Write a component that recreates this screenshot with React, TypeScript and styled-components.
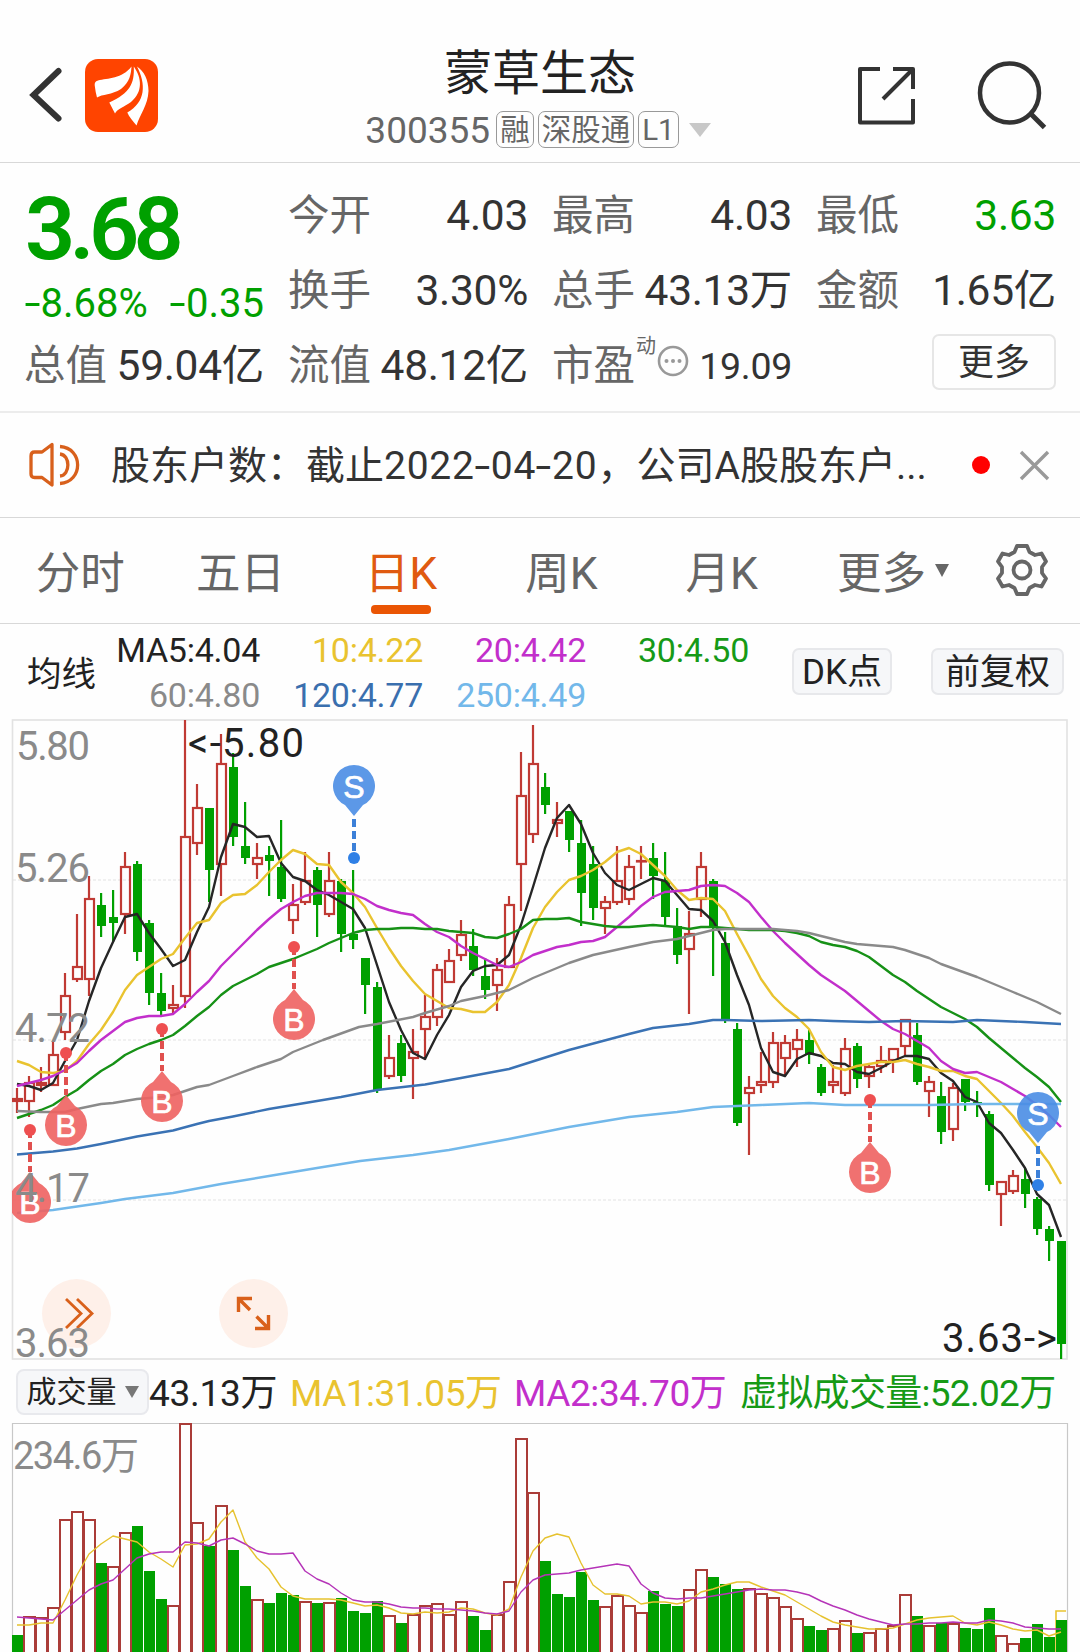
import React from "react";
import styled, { createGlobalStyle, css } from "styled-components";

const GREEN = "#00a000";
const RED = "#c03a34";
const YELLOW = "#e9c32f";
const MAGENTA = "#c22fcb";
const FONT = 'Roboto, "Noto Sans CJK SC", sans-serif';

const Global = createGlobalStyle`
  html, body { margin: 0; padding: 0; background: #fefefe; }
  *, *::before, *::after { box-sizing: border-box; }
  body { font-family: ${FONT}; color: #333; }
  svg { display: block; }
  button { font: inherit; color: inherit; background: none; border: 0; padding: 0; margin: 0; }
`;

const Page = styled.div`
  width: 1080px;
  height: 1652px;
  overflow: hidden;
  display: flex;
  flex-direction: column;
  background: #fefefe;
`;

/* ---------- header ---------- */
const Header = styled.header`
  flex: none;
  height: 163px;
  border-bottom: 1.5px solid #d8d8d8;
  display: grid;
  grid-template-columns: 340px 1fr 340px;
  padding-top: 42px;
`;
const HeaderSide = styled.div<{ $end?: boolean }>`
  display: flex;
  align-items: flex-start;
  justify-content: ${(p) => (p.$end ? "flex-end" : "flex-start")};
  gap: ${(p) => (p.$end ? "60px" : "21px")};
  padding: ${(p) => (p.$end ? "17px 31px 0 0" : "17px 0 0 28px")};
`;
const TitleBlock = styled.div`
  display: flex;
  flex-direction: column;
  align-items: center;
`;
const Title = styled.h1`
  margin: 0;
  padding-top: 2px;
  font-size: 48px;
  line-height: 60px;
  font-weight: 400;
  color: #222;
`;
const CodeRow = styled.div`
  display: flex;
  align-items: center;
  height: 37px;
  margin: 7px 4px 0 0;
  color: #666;
  gap: 4px;
`;
const Code = styled.span`
  font-size: 37px;
  line-height: 37px;
  margin-right: 2px;
  padding-top: 1px;
`;
const Tag = styled.span`
  height: 37px;
  border: 1.5px solid #999;
  border-radius: 7px;
  padding: 0 3px;
  font-size: 29.5px;
  line-height: 36px;
`;
const Caret = styled.span<{ $w: number; $h: number; $c: string; $ml?: number }>`
  width: 0;
  height: 0;
  margin-left: ${(p) => p.$ml || 0}px;
  border-left: ${(p) => p.$w / 2}px solid transparent;
  border-right: ${(p) => p.$w / 2}px solid transparent;
  border-top: ${(p) => p.$h}px solid ${(p) => p.$c};
`;
const Hyphen = styled.span`
  display: inline-block;
  margin: 0 2.5px 0 2px;
  transform: scaleX(1.45);
`;

/* ---------- quote ---------- */
const Quote = styled.section`
  flex: none;
  height: 250px;
  border-bottom: 2px solid #ececec;
  padding: 15px 24px 0 25px;
  display: grid;
  grid-template-columns: repeat(4, 1fr);
  grid-template-rows: 75px 75px 75px;
  column-gap: 25px;
`;
const PriceBlock = styled.div`
  grid-row: span 2;
  color: ${GREEN};
`;
const Price = styled.div`
  font-size: 88px;
  line-height: 102px;
  font-weight: 600;
  letter-spacing: -5.7px;
`;
const Change = styled.div`
  display: flex;
  justify-content: space-between;
  font-size: 40px;
  line-height: 48px;
`;
const Cell = styled.div`
  display: flex;
  align-items: center;
  justify-content: space-between;
  white-space: nowrap;
  height: 75px;
`;
const CellLabel = styled.span`
  display: flex;
  margin-left: -1px;
  font-size: 41.5px;
  line-height: 50px;
  color: #666;
`;
const CellValue = styled.span<{ $c?: string; $small?: boolean }>`
  font-size: ${(p) => (p.$small ? 37.5 : 42.5)}px;
  line-height: 50px;
  letter-spacing: -0.3px;
  color: ${(p) => p.$c || "#333"};
`;
const Sup = styled.sup`
  font-size: 20px;
  line-height: 20px;
  margin: -5px 0 0 1px;
`;
const Info = styled.span`
  margin: 4px 0 0 1px;
`;
const MoreCell = styled.div`
  display: flex;
  justify-content: flex-end;
  align-items: center;
`;
const MoreButton = styled.button`
  width: 124px;
  height: 56px;
  margin-top: -7px;
  border: 2px solid #e6e6e6;
  border-radius: 7px;
  font-size: 36px;
  line-height: 54px;
`;

/* ---------- notice ---------- */
const Notice = styled.section`
  flex: none;
  height: 105px;
  border-bottom: 1.5px solid #d8d8d8;
  display: flex;
  align-items: center;
  padding: 0 29px;
`;
const NoticeText = styled.p`
  margin: 2px 0 0 29px;
  width: 861px;
  font-size: 39px;
  line-height: 50px;
  white-space: nowrap;
  color: #333;
`;
const NoticeDate = styled.span`
  letter-spacing: 0.75px;
`;
const Dot = styled.span`
  flex: none;
  width: 18px;
  height: 18px;
  border-radius: 50%;
  background: #f00;
  margin: 0 29px 0 0;
`;

/* ---------- tabs ---------- */
const Tabs = styled.nav`
  flex: none;
  height: 106px;
  border-bottom: 1.5px solid #d8d8d8;
  display: grid;
  grid-template-columns: repeat(5, 160.4px) 1fr 110px;
`;
const Tab = styled.button<{ $on?: boolean }>`
  display: flex;
  flex-direction: column;
  align-items: center;
  padding-top: 27px;
  font-size: 44.5px;
  line-height: 58px;
  color: ${(p) => (p.$on ? "#e05a10" : "#666")};
  ${(p) =>
    p.$on &&
    css`
      &::after {
        content: "";
        width: 60px;
        height: 9px;
        margin-top: 2px;
        border-radius: 4px;
        background: #ea5504;
      }
    `}
`;
const MoreTab = styled(Tab)`
  flex-direction: row;
  align-items: flex-start;
  gap: 9px;
  padding-left: 35px;
  & > ${Caret} { margin-top: 19px; }
`;
const GearBox = styled.div`
  padding: 25px 0 0 25px;
`;

/* ---------- moving average legend ---------- */
const Legend = styled.section`
  flex: none;
  height: 95px;
  display: flex;
  align-items: center;
  padding: 0 16px 0 27px;
`;
const LegendName = styled.span`
  width: 70px;
  font-size: 34.5px;
  line-height: 44px;
  color: #222;
  margin-top: 5px;
`;
const LegendGrid = styled.div`
  display: grid;
  grid-template-columns: repeat(4, 163px);
  grid-auto-rows: 45px;
  text-align: right;
  font-size: 34px;
  letter-spacing: -0.25px;
  line-height: 45px;
  margin-top: 2px;
  white-space: nowrap;
`;
const LegendItem = styled.span<{ $c: string }>`
  color: ${(p) => p.$c};
`;
const Chip = styled.button<{ $w: number; $ml: number }>`
  width: ${(p) => p.$w}px;
  height: 47px;
  margin-left: ${(p) => p.$ml}px;
  border: 2px solid #e7e8eb;
  border-radius: 7px;
  background: #f6f7f9;
  font-size: 35px;
  line-height: 46px;
  color: #222;
  white-space: nowrap;
`;

/* ---------- charts ---------- */
const ChartBox = styled.section`
  flex: none;
  position: relative;
  height: 642px;
`;
const PlotLayer = styled.div`
  position: relative;
  z-index: 1;
  pointer-events: none;
`;
const Fab = styled.button<{ $x: number }>`
  position: absolute;
  left: ${(p) => p.$x}px;
  top: 560px;
  width: 69px;
  height: 69px;
  border-radius: 50%;
  background: #fef0e9;
  display: grid;
  place-items: center;
`;
const VolumeHead = styled.section`
  flex: none;
  height: 61px;
  display: flex;
  align-items: center;
  padding-left: 16px;
  white-space: nowrap;
  font-size: 37px;
  line-height: 46px;
`;
const VolumePicker = styled.button`
  width: 133px;
  height: 46px;
  border: 2px solid #e8e9ed;
  border-radius: 8px;
  background: #f6f7f9;
  display: flex;
  align-items: center;
  justify-content: center;
  gap: 8px;
  font-size: 30px;
  line-height: 42px;
  color: #222;
`;
const VolumeStat = styled.span<{ $c: string; $w: number; $ls: number }>`
  width: ${(p) => p.$w}px;
  padding-top: 4px;
  color: ${(p) => p.$c};
  letter-spacing: ${(p) => p.$ls}px;
`;
const VolumeBox = styled.section`
  flex: none;
  height: 230px;
`;

type Candle = [number, number, number, number, number]; // up(1)/down(0), high, top, bottom, low
const candles: Candle[] = [
  [1,1088,1098,1102,1113],[1,1076,1082,1102,1117],[1,1067,1082,1086,1092],[1,1042,1054,1086,1086],
  [1,973,995,1033,1040],[1,914,966,980,982],[1,876,898,980,996],[0,893,905,926,937],
  [0,890,917,923,942],[1,852,866,915,934],[0,861,864,952,961],[0,920,923,993,1005],
  [0,973,993,1011,1016],[1,985,1004,1009,1014],[1,720,836,997,1008],[1,784,807,844,855],
  [0,808,808,870,902],[1,734,763,865,896],[0,753,767,837,846],[0,802,846,858,864],
  [1,843,857,865,879],[0,846,855,861,896],[0,820,867,899,902],[1,884,904,921,934],
  [1,852,880,903,905],[0,867,870,905,937],[1,852,880,915,917],[0,879,881,934,952],
  [0,870,934,940,949],[0,958,958,985,1014],[0,982,987,1090,1093],[1,1035,1057,1077,1079],
  [0,1035,1043,1076,1082],[1,1029,1051,1059,1099],[1,995,1016,1030,1060],[1,964,969,1018,1026],
  [1,949,960,983,983],[1,920,934,956,961],[0,929,946,970,976],[0,958,976,990,999],
  [1,958,969,986,1011],[1,896,904,968,968],[1,752,795,865,911],[1,725,763,835,843],
  [0,773,787,805,814],[1,802,819,824,837],[0,811,811,840,852],[0,820,843,893,926],
  [0,846,864,908,920],[1,896,901,909,934],[1,846,880,903,905],[1,855,866,900,905],
  [1,846,860,862,879],[0,843,858,876,899],[0,852,880,917,926],[0,908,926,955,964],
  [1,911,933,950,1014],[1,852,866,900,917],[0,879,881,928,976],[0,932,943,1020,1023],
  [0,1023,1029,1123,1126],[1,1076,1087,1094,1155],[1,1052,1081,1086,1093],[1,1032,1042,1083,1088],
  [1,1035,1042,1059,1076],[1,1029,1039,1050,1067],[0,1030,1040,1055,1064],[0,1064,1067,1093,1096],
  [1,1065,1081,1086,1093],[1,1038,1048,1094,1096],[0,1043,1046,1079,1088],[1,1065,1066,1077,1088],
  [1,1046,1060,1067,1073],[1,1048,1048,1061,1073],[1,1019,1019,1047,1057],[0,1023,1035,1082,1085],
  [1,1076,1081,1092,1117],[0,1082,1096,1132,1144],[1,1083,1087,1130,1141],[0,1079,1079,1102,1111],
  [0,1091,1102,1104,1117],[0,1111,1114,1185,1191],[1,1181,1181,1195,1226],[1,1170,1175,1192,1194],
  [0,1168,1179,1194,1208],[0,1197,1199,1229,1235],[0,1226,1229,1241,1261],[0,1241,1241,1344,1359],
];

const ma5 = [1084,1086,1090,1083,1061,1040,1001,968,942,917,914,933,949,966,960,932,907,857,824,827,837,836,863,877,881,890,895,902,909,928,965,1002,1030,1053,1059,1035,1015,987,971,966,965,955,925,887,848,818,805,824,853,873,885,890,884,878,881,895,909,910,921,942,975,1005,1048,1072,1076,1059,1053,1056,1063,1064,1072,1074,1068,1061,1056,1056,1059,1073,1081,1097,1102,1123,1133,1150,1168,1194,1205,1237];
const ma10 = [1061,1065,1072,1073,1071,1061,1044,1030,1012,990,975,967,959,954,938,923,920,903,895,894,885,872,860,850,854,864,865,882,893,907,928,948,966,981,994,1001,1008,1009,1012,1012,1002,985,958,928,907,892,880,876,870,862,852,848,854,865,876,890,900,898,899,911,934,956,979,996,1008,1017,1029,1052,1067,1070,1066,1064,1062,1062,1060,1064,1067,1071,1071,1076,1079,1091,1103,1116,1132,1147,1163,1184];
const ma20 = [1086,1083,1080,1076,1070,1063,1051,1040,1031,1022,1018,1016,1016,1014,1004,992,981,966,954,942,930,919,909,902,896,893,893,893,894,899,906,910,913,915,924,932,937,946,953,959,965,967,962,955,951,947,945,942,941,937,927,917,906,897,892,891,890,886,885,886,893,902,917,931,943,954,965,975,983,991,1001,1011,1021,1029,1034,1041,1048,1061,1069,1073,1072,1077,1082,1089,1096,1105,1115,1127];
const ma30 = [1118,1114,1110,1105,1097,1090,1080,1071,1064,1055,1049,1044,1040,1035,1026,1016,1007,995,986,980,974,967,963,959,954,949,943,938,933,930,929,929,928,928,929,929,931,932,933,937,938,934,929,920,919,919,918,922,924,926,927,927,926,925,926,927,929,927,927,928,929,930,930,930,931,933,936,942,945,947,951,957,966,975,982,991,999,1007,1013,1019,1027,1038,1048,1058,1068,1077,1087,1102];
type Pt = [number, number];
const ma60: Pt[] = [[0,1111],[2,1112],[4,1112],[5,1109],[7,1104],[8,1103],[10,1099],[12,1097],[13,1095],[15,1087],[16,1085],[18,1076],[20,1067],[22,1059],[23,1052],[25.5,1040],[28.5,1027],[30,1024],[33,1017],[34,1013],[36,1006],[37,1001],[39,996],[41,990],[43,978],[46,963],[48,955],[51,947],[53,942],[55,939],[56,936],[58,930],[59,929],[63,929],[65,931],[66,933],[67,936],[69,942],[70,944],[73,947],[74,950],[76,958],[77,964],[80,977],[81,982],[83,992],[85,1002],[87,1014]];
const ma120: Pt[] = [[0,1154.5],[3,1151.5],[5,1148.5],[7,1144],[10,1136.5],[13,1130.5],[15,1124],[16,1121],[18,1116.5],[21,1109],[23,1105],[27,1097],[30,1090],[34,1084.5],[37,1078],[41,1069],[46,1050],[51,1034],[53,1028],[56,1024],[58,1020],[59,1020],[62,1021],[66,1020],[68,1021],[71,1022],[74,1021],[78,1022],[80,1020],[84,1022],[87,1024]];
const ma250: Pt[] = [[0,1213],[3,1210],[7,1203],[9,1199],[13,1193],[17,1184],[21,1176],[25,1168],[28.6,1161],[33,1155],[36,1150],[41,1139],[46,1127],[51,1117],[55,1112],[58,1107],[62,1105],[66,1103],[69,1105],[76,1105],[80,1104],[87,1104]];

const volumes = [1635,1616,1617,1607,1519,1511,1519,1563,1566,1532,1526,1571,1599,1605,1423,1522,1546,1505,1550,1586,1599,1603,1593,1595,1601,1603,1602,1598,1611,1613,1601,1615,1623,1614,1605,1603,1614,1601,1616,1630,1614,1581,1438,1492,1561,1594,1597,1572,1600,1606,1595,1605,1612,1591,1604,1606,1589,1569,1577,1584,1589,1588,1593,1597,1606,1618,1626,1630,1628,1620,1633,1632,1628,1625,1594,1616,1625,1623,1623,1628,1629,1608,1635,1643,1638,1624,1637,1620];
// 1 = rising bar (outlined), 0 = falling bar (filled), ten days per group
const volumeUp = [
  "0111111011", "0001110100", "1000101000", "0101111100", "1111000001",
  "1110001100", "0111110011", "0111101010", "00110000",
].join("");
const volMa1 = [1625,1625,1623,1623,1600,1575,1554,1544,1536,1539,1542,1552,1559,1567,1545,1544,1539,1522,1510,1542,1558,1569,1587,1596,1599,1599,1599,1600,1603,1606,1605,1608,1613,1614,1612,1613,1612,1608,1609,1613,1615,1609,1577,1551,1538,1534,1537,1563,1585,1594,1594,1596,1604,1602,1602,1604,1601,1592,1589,1585,1582,1582,1587,1591,1595,1602,1609,1616,1622,1625,1627,1629,1629,1628,1624,1620,1618,1617,1616,1623,1625,1622,1625,1629,1631,1630,1636,1632];
const volMa2 = [1617,1618,1619,1620,1610,1600,1590,1584,1580,1569,1558,1554,1552,1552,1542,1543,1546,1540,1538,1544,1551,1554,1554,1553,1571,1579,1584,1593,1600,1602,1602,1604,1607,1608,1608,1609,1609,1610,1611,1613,1614,1611,1592,1580,1575,1574,1573,1570,1568,1566,1564,1566,1584,1593,1598,1599,1598,1598,1596,1594,1592,1590,1589,1590,1590,1592,1595,1601,1606,1610,1615,1619,1622,1625,1624,1624,1623,1623,1622,1623,1623,1620,1621,1623,1627,1628,1629,1629];

const xAt = (i: number) => 17 + 12 * i;
const dense = (ys: number[]) => ys.map((y, i) => `${xAt(i)},${y}`).join(" ");
const sparse = (pts: Pt[]) => pts.map(([i, y]) => `${xAt(i)},${y}`).join(" ");

const Marker = ({ kind, x, dot }: { kind: "B" | "S"; x: number; dot: number }) => {
  const buy = kind === "B";
  const dir = buy ? 1 : -1;
  const c = dot + 72 * dir;
  const tip = dot + 42 * dir;
  return (
    <g>
      <line x1={x} x2={x} y1={dot} y2={tip} stroke={buy ? "#e0504e" : "#3c80d8"} strokeWidth={4} strokeDasharray="8 4" strokeDashoffset={buy ? 0 : 5} />
      <circle cx={x} cy={dot} r={6} fill={buy ? "#ee4f50" : "#2f80e6"} />
      <path
        d={`M${x} ${tip} L${x + 9} ${c - 19 * dir} A21 21 0 1 ${buy ? 1 : 0} ${x - 9} ${c - 19 * dir} Z`}
        fill={buy ? "#ee6260" : "#4a8de4"}
        fillOpacity={0.9}
      />
      <text x={x} y={c + 11.5} fontFamily='"Liberation Sans", sans-serif' fontSize={32} textAnchor="middle" fill="#fff" stroke="#fff" strokeWidth={0.7}>{kind}</text>
    </g>
  );
};

const AxisText = ({ x, y, w, c = "#8a8a8a", children }: { x: number; y: number; w: number; c?: string; children: string }) => (
  <text x={x} y={y} fontSize={40} fill={c} textLength={w}>{children}</text>
);

const PriceChart = () => (
  <svg width="1080" height="642" viewBox="0 719 1080 642" fontFamily={FONT}>
    <defs>
      <clipPath id="plot"><rect x="12" y="719" width="1056" height="642" /></clipPath>
    </defs>
    {[880, 1040, 1200].map((y) => (
      <line key={y} x1="13" x2="1066" y1={y} y2={y} stroke="#ececec" strokeWidth="1.5" strokeDasharray="3 2" />
    ))}
    <rect x="12.5" y="720" width="1054.5" height="639" fill="none" stroke="#e2e2e2" strokeWidth="1.6" />
    <g clipPath="url(#plot)">
      {candles.map(([up, high, top, bottom, low], i) => {
        const x = xAt(i);
        return up ? (
          <g key={i} stroke={RED} strokeWidth="2.2" fill="none">
            <path d={`M${x} ${high}V${top}M${x} ${bottom}V${low}`} />
            <rect x={x - 4} y={top + 1} width="9" height={Math.max(bottom - top - 2, 0.5)} />
          </g>
        ) : (
          <g key={i} fill={GREEN}>
            <rect x={x - 1} y={high} width="2.2" height={low - high} />
            <rect x={x - 4} y={top} width="9" height={bottom - top} />
          </g>
        );
      })}
      <g fill="none" strokeWidth="2.4" strokeLinejoin="round">
        <polyline points={dense(ma5)} stroke="#262626" />
        <polyline points={dense(ma10)} stroke={YELLOW} />
        <polyline points={dense(ma20)} stroke={MAGENTA} />
        <polyline points={dense(ma30)} stroke="#169116" />
        <polyline points={sparse(ma60)} stroke="#8a8a8a" />
        <polyline points={sparse(ma120)} stroke="#3a72b4" />
        <polyline points={sparse(ma250)} stroke="#72b8ea" />
      </g>
      <Marker kind="B" x={30} dot={1130} />
      <Marker kind="B" x={66} dot={1053} />
      <Marker kind="B" x={162} dot={1029} />
      <Marker kind="B" x={294} dot={947} />
      <Marker kind="B" x={870} dot={1100} />
      <Marker kind="S" x={354} dot={858} />
      <Marker kind="S" x={1038} dot={1185} />
    </g>
    <AxisText x={16} y={760} w={74}>5.80</AxisText>
    <AxisText x={15} y={881.5} w={75}>5.26</AxisText>
    <AxisText x={15} y={1042} w={75}>4.72</AxisText>
    <AxisText x={15} y={1201.5} w={75}>4.17</AxisText>
    <AxisText x={15} y={1357} w={75}>3.63</AxisText>
    <AxisText x={188} y={757} w={116} c="#222">{"<-5.80"}</AxisText>
    <AxisText x={942} y={1352} w={115} c="#222">{"3.63->"}</AxisText>
  </svg>
);

const VolumeChart = () => (
  <svg width="1080" height="230" viewBox="0 1422 1080 230" fontFamily={FONT}>
    <path d="M12.5 1652V1423.5H1067.5V1652" fill="none" stroke="#c8c8c8" strokeWidth="1.2" />
    <text x="13" y="1468.5" fontSize="38" fill="#8a8a8a" textLength="126">234.6万</text>
    {volumes.map((top, i) => {
      const x = xAt(i);
      return volumeUp[i] === "1" ? (
        <rect key={i} x={x - 5} y={top + 1} width="11" height={260} fill="#fefefe" stroke="#aa3c38" strokeWidth="2" />
      ) : (
        <rect key={i} x={x - 5} y={top} width="11" height={260} fill={GREEN} />
      );
    })}
    <path d="M1056 1652V1611H1066" fill="none" stroke={YELLOW} strokeWidth="1.6" />
    <rect x="1056" y="1620" width="11" height="32" fill={GREEN} />
    <g fill="none" strokeWidth="1.4" strokeLinejoin="round">
      <polyline points={dense(volMa1)} stroke="#e6c22f" />
      <polyline points={dense(volMa2)} stroke="#b534b8" />
    </g>
  </svg>
);

/* ---------- icons ---------- */
const BackIcon = () => (
  <svg width="36" height="72" viewBox="28 59 36 72">
    <path d="M58.5 71L33.5 95L58.5 118.5" fill="none" stroke="#333" strokeWidth="6" strokeLinecap="round" />
  </svg>
);
const LogoIcon = () => (
  <svg width="73" height="73" viewBox="85 59 73 73">
    <rect x="85" y="59" width="73" height="73" rx="13" fill="#ff4400" />
    <g fill="#fff">
      <path d="M131.5 66.5C122 79 108 78 98 80.5C95 81.5 94.500 83 94.8 86Q95.5 92 97 97.6C102 94 112 95 121 89C130 82 131 74 131.5 66.5Z" />
      <path d="M133.8 66.5C134.5 84 130 93 109.3 102.5L115 113.5C117 109 124 107 131 102C143 92 142 78 133.8 66.5Z" />
      <path d="M137 66.5C146 84 146 102 127.3 112.5C129 117 133 121 136.5 125.5C140 114 148 105 148.5 91C148.5 80 144 71 137 66.5Z" />
    </g>
  </svg>
);
const ShareIcon = () => (
  <svg width="60" height="66" viewBox="857 59 60 66">
    <g fill="none" stroke="#333" strokeWidth="4" strokeLinejoin="round" strokeLinecap="butt">
      <path d="M880 69H860V122.5H913V99" />
      <path d="M893 69H913V89M913 69L883 99" />
    </g>
  </svg>
);
const SearchIcon = () => (
  <svg width="72" height="72" viewBox="977 59 72 72">
    <circle cx="1009.5" cy="93" r="29.5" fill="none" stroke="#333" strokeWidth="4.5" />
    <path d="M1030 113L1044.5 127.5" stroke="#333" strokeWidth="5" />
  </svg>
);
const SpeakerIcon = () => (
  <svg width="53" height="46" viewBox="29 441 53 46">
    <g fill="none" stroke="#d8601c" strokeWidth="3.3" strokeLinejoin="round">
      <path d="M52 443.5L42 451H34.5Q31 451 31 455V473Q31 476.5 34.5 476.5H42L52 484Z" />
      <path d="M60 453C70.5 454 70.5 474 60 475M60 445.5C83.5 447 83.5 481 60 482.5" />
    </g>
  </svg>
);
const CloseIcon = () => (
  <svg width="31" height="31" viewBox="0 0 31 31">
    <path d="M2 2L29 29M29 2L2 29" stroke="#999" strokeWidth="3.4" />
  </svg>
);
const InfoIcon = () => (
  <svg width="32" height="32" viewBox="0 0 32 32">
    <circle cx="16" cy="16" r="14" fill="none" stroke="#999" strokeWidth="2.6" />
    <g fill="#999"><circle cx="9.5" cy="16" r="2" /><circle cx="16" cy="16" r="2" /><circle cx="22.5" cy="16" r="2" /></g>
  </svg>
);
const GearIcon = () => (
  <svg width="54" height="54" viewBox="-27 -27 54 54">
    <g fill="none" stroke="#666" strokeWidth="3.8" strokeLinejoin="round">
      <path d="M-5 -24H5L7.5 -18L13 -15L19.5 -16.5L24 -8.5L20 -3V3L24 8.5L19.5 16.5L13 15L7.5 18L5 24H-5L-7.5 18L-13 15L-19.5 16.5L-24 8.5L-20 3V-3L-24 -8.5L-19.5 -16.5L-13 -15L-7.5 -18Z" />
      <circle r="8.5" />
    </g>
  </svg>
);

const App = () => (
  <Page>
    <Global />
    <Header>
      <HeaderSide><BackIcon /><LogoIcon /></HeaderSide>
      <TitleBlock>
        <Title>蒙草生态</Title>
        <CodeRow>
          <Code>300355</Code>
          <Tag>融</Tag>
          <Tag>深股通</Tag>
          <Tag>L1</Tag>
          <Caret $w={22} $h={14} $c="#c8c8c8" $ml={6} />
        </CodeRow>
      </TitleBlock>
      <HeaderSide $end><ShareIcon /><SearchIcon /></HeaderSide>
    </Header>

    <Quote>
      <PriceBlock>
        <Price>3.68</Price>
        <Change>
          <span><Hyphen>-</Hyphen>8.68%</span>
          <span><Hyphen>-</Hyphen>0.35</span>
        </Change>
      </PriceBlock>
      <Cell><CellLabel>今开</CellLabel><CellValue>4.03</CellValue></Cell>
      <Cell><CellLabel>最高</CellLabel><CellValue>4.03</CellValue></Cell>
      <Cell><CellLabel>最低</CellLabel><CellValue $c={GREEN}>3.63</CellValue></Cell>
      <Cell><CellLabel>换手</CellLabel><CellValue>3.30%</CellValue></Cell>
      <Cell><CellLabel>总手</CellLabel><CellValue>43.13万</CellValue></Cell>
      <Cell><CellLabel>金额</CellLabel><CellValue>1.65亿</CellValue></Cell>
      <Cell><CellLabel>总值</CellLabel><CellValue>59.04亿</CellValue></Cell>
      <Cell><CellLabel>流值</CellLabel><CellValue>48.12亿</CellValue></Cell>
      <Cell>
        <CellLabel>市盈<Sup>动</Sup><Info><InfoIcon /></Info></CellLabel>
        <CellValue $small>19.09</CellValue>
      </Cell>
      <MoreCell><MoreButton>更多</MoreButton></MoreCell>
    </Quote>

    <Notice>
      <SpeakerIcon />
      <NoticeText>
        股东户数：截止<NoticeDate>2022<Hyphen>-</Hyphen>04<Hyphen>-</Hyphen>20</NoticeDate>，公司A股股东户...
      </NoticeText>
      <Dot />
      <CloseIcon />
    </Notice>

    <Tabs>
      <Tab>分时</Tab>
      <Tab>五日</Tab>
      <Tab $on>日K</Tab>
      <Tab>周K</Tab>
      <Tab>月K</Tab>
      <MoreTab>更多<Caret $w={15} $h={13} $c="#666" /></MoreTab>
      <GearBox><GearIcon /></GearBox>
    </Tabs>

    <Legend>
      <LegendName>均线</LegendName>
      <LegendGrid>
        <LegendItem $c="#222">MA5:4.04</LegendItem>
        <LegendItem $c={YELLOW}>10:4.22</LegendItem>
        <LegendItem $c={MAGENTA}>20:4.42</LegendItem>
        <LegendItem $c="#169a16">30:4.50</LegendItem>
        <LegendItem $c="#8a8a8a">60:4.80</LegendItem>
        <LegendItem $c="#3a6fae">120:4.77</LegendItem>
        <LegendItem $c="#72b8ea">250:4.49</LegendItem>
      </LegendGrid>
      <Chip $w={100} $ml={43}>DK点</Chip>
      <Chip $w={133} $ml={39}>前复权</Chip>
    </Legend>

    <ChartBox>
      <Fab $x={42}>
        <svg width="69" height="69" viewBox="42 1279 69 69">
          <path d="M66 1299L81 1313.5L66 1328M77 1299L92 1313.5L77 1328" fill="none" stroke="#d9601a" strokeWidth="2.8" />
        </svg>
      </Fab>
      <Fab $x={219}>
        <svg width="69" height="69" viewBox="219 1279 69 69">
          <path d="M238.5 1312V1298.5H252M238.5 1298.5L250 1310M268.5 1315V1328.5H255M268.5 1328.5L256.5 1316.5" fill="none" stroke="#d9601a" strokeWidth="3.4" />
        </svg>
      </Fab>
      <PlotLayer><PriceChart /></PlotLayer>
    </ChartBox>

    <VolumeHead>
      <VolumePicker>成交量<Caret $w={15} $h={12} $c="#777" /></VolumePicker>
      <VolumeStat $c="#222" $w={141} $ls={-0.3}>43.13万</VolumeStat>
      <VolumeStat $c={YELLOW} $w={224} $ls={-0.5}>MA1:31.05万</VolumeStat>
      <VolumeStat $c={MAGENTA} $w={226} $ls={-0.4}>MA2:34.70万</VolumeStat>
      <VolumeStat $c="#169a16" $w={330} $ls={-0.7}>虚拟成交量:52.02万</VolumeStat>
    </VolumeHead>
    <VolumeBox><VolumeChart /></VolumeBox>
  </Page>
);

export default App;
